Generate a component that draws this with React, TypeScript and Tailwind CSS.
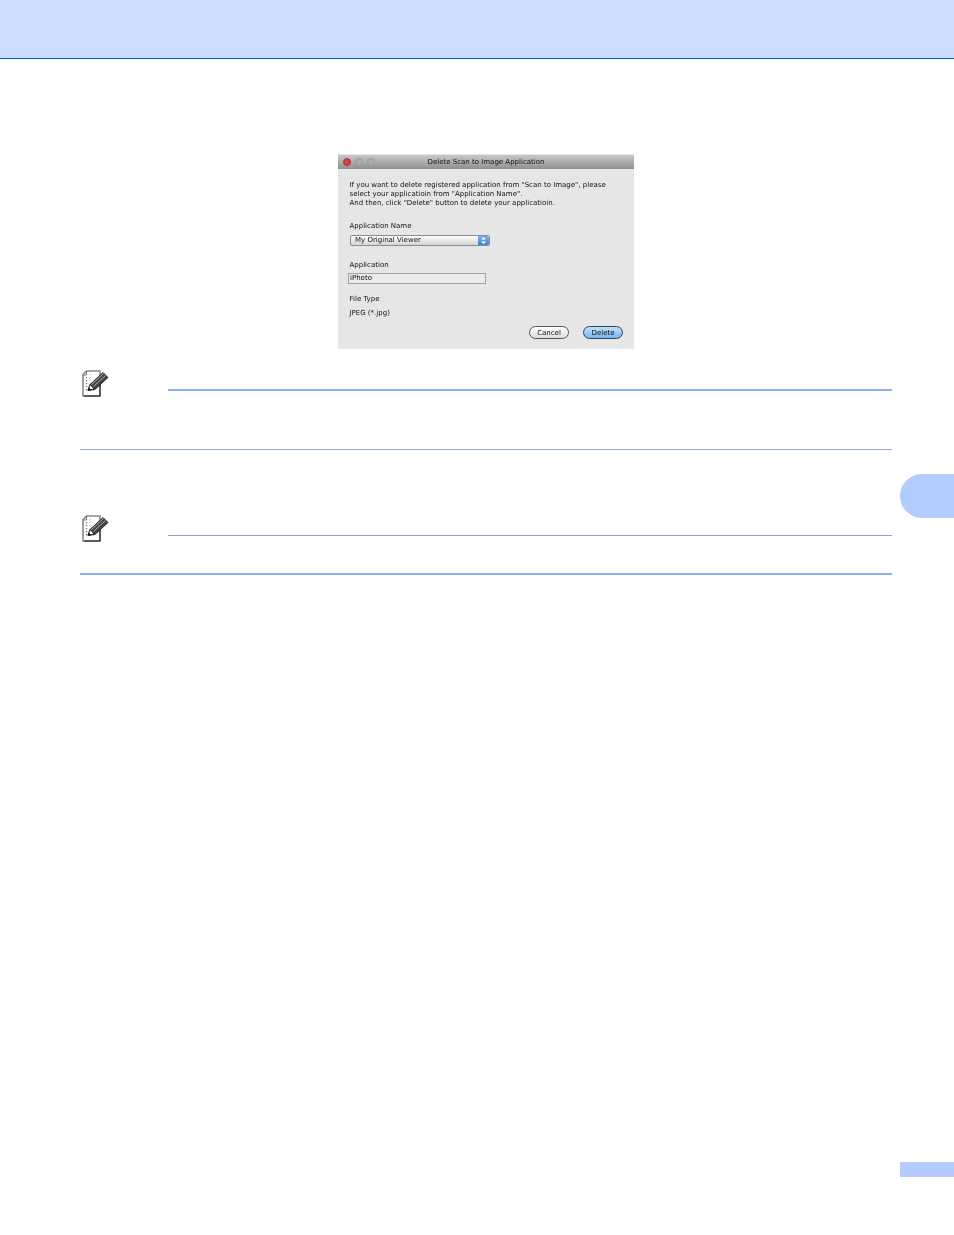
function NoteIcon() {
  return (
    <svg width="30" height="30" viewBox="0 0 30 30" className="block">
      <path d="M3 5.5 L6.5 2 H20 V27 H3 Z" fill="#fff" stroke="#8a8a8a" strokeWidth="1.6" />
      <path d="M20 9 V27 H4" fill="none" stroke="#111" strokeWidth="1" />
      <path d="M6.5 2 V6 H3" fill="none" stroke="#555" strokeWidth="0.8" />
      <path d="M6.5 8 V22" stroke="#777" strokeWidth="1.3" strokeDasharray="1.3 1.7" fill="none" />
      <path d="M10 5 V14" stroke="#aaa" strokeWidth="1" strokeDasharray="1 2" fill="none" />
      <path d="M8 21.5 L10 15.5 L23 3.5 L28 8.5 L15 20.5 Z" fill="#444" stroke="#111" strokeWidth="0.8" />
      <path d="M11.5 15.5 L23.5 4.5 M13.5 17.5 L25.5 6.5" stroke="#bbb" strokeWidth="0.9" fill="none" />
      <path d="M8 21.5 L10 15.5 L14 19.8 Z" fill="#fff" stroke="#111" strokeWidth="0.8" />
      <path d="M8 21.5 L9 18.6 L11 20.6 Z" fill="#111" />
    </svg>
  );
}

function Dialog() {
  return (
    <div className="w-[296px] h-[195px] bg-[#e6e6e6] flex flex-col font-['DejaVu_Sans',sans-serif] text-[7px] text-[#111] blur-[0.4px] leading-[9px]">
      <div className="h-[14px] mt-[1px] bg-gradient-to-b from-[#c9c9c9] to-[#909090] flex items-center relative">
        <div className="flex items-center gap-[4px] pl-[5px] absolute left-0 top-[3px]">
          <span className="w-[8px] h-[8px] rounded-full bg-[#d9403f] border border-[#a33]"></span>
          <span className="w-[8px] h-[8px] rounded-full bg-[#ababab] border border-[#999]"></span>
          <span className="w-[8px] h-[8px] rounded-full bg-[#ababab] border border-[#999]"></span>
        </div>
        <span className="w-full text-center">Delete Scan to Image Application</span>
      </div>
      <div className="flex flex-col pl-[11.5px] pt-[12px]">
        <p className="whitespace-nowrap">If you want to delete registered application from "Scan to Image", please</p>
        <p className="whitespace-nowrap">select your applicatioin from "Application Name".</p>
        <p className="whitespace-nowrap">And then, click "Delete" button to delete your applicatioin.</p>
        <p className="mt-[14px]">Application Name</p>
        <div className="mt-[4px] w-[140px] h-[11px] ml-[0.5px] rounded-[2px] bg-gradient-to-b from-[#ffffff] to-[#d4d4d4] border border-[#8c8c8c] flex items-center justify-between">
          <span className="pl-[4px]">My Original Viewer</span>
          <span className="w-[11px] h-full bg-gradient-to-b from-[#7fb0ee] to-[#3f7fd8] rounded-r-[2px] flex flex-col items-center justify-center gap-[1px]">
            <svg width="5" height="7" viewBox="0 0 5 7"><path d="M2.5 0 L5 2.6 H0 Z M2.5 7 L0 4.4 H5 Z" fill="#fff" /></svg>
          </span>
        </div>
        <p className="mt-[15px]">Application</p>
        <div className="mt-[3px] -ml-[1.5px] w-[138px] h-[11px] border border-[#a2a2a2] bg-[#ececec] flex items-center">
          <span className="pl-[1px] text-[#000]">iPhoto</span>
        </div>
        <p className="mt-[11px]">File Type</p>
        <p className="mt-[5px]">JPEG (*.jpg)</p>
      </div>
      <div className="flex justify-end gap-[14px] pr-[11px] mt-[8px]">
        <span className="w-[40px] h-[13px] rounded-full border border-[#555] bg-gradient-to-b from-[#ffffff] to-[#dcdcdc] text-center leading-[12px]">Cancel</span>
        <span className="w-[40px] h-[13px] rounded-full border border-[#345] bg-gradient-to-b from-[#c2e0f9] to-[#78b4f0] text-center leading-[12px]">Delete</span>
      </div>
    </div>
  );
}

export default function App() {
  return (
    <div className="w-[954px] h-[1235px] bg-white flex flex-col overflow-hidden">
      <div className="h-[59px] shrink-0 bg-[#ccdcfe] border-b border-[#0b55d8]"></div>
      <div className="flex mt-[95px] pl-[338px]">
        <Dialog />
      </div>
      <div className="flex items-start mt-[20px] pl-[80px] pr-[62px]">
        <div className="w-[88px] shrink-0"><NoteIcon /></div>
        <div className="flex-1 h-[2px] mt-[20px] bg-[#8fb0f8]"></div>
      </div>
      <div className="ml-[79.5px] mr-[62px] h-[1px] mt-[50px] bg-[#93a9e0]"></div>
      <div className="flex justify-end mt-[24px] h-[44px] shrink-0">
        <div className="w-[54px] h-[44px] bg-[#b3cbff] rounded-l-[22px]"></div>
      </div>
      <div className="flex items-start -mt-[4px] pl-[80px] pr-[62px]">
        <div className="w-[88px] shrink-0"><NoteIcon /></div>
        <div className="flex-1 h-[1px] mt-[21px] bg-[#8fa3d8]"></div>
      </div>
      <div className="ml-[79.5px] mr-[62px] h-[2px] mt-[29px] bg-[#8fb0f8]"></div>
      <div className="flex justify-end mt-[587px]">
        <div className="w-[54px] h-[15px] bg-[#b3cbff]"></div>
      </div>
    </div>
  );
}
